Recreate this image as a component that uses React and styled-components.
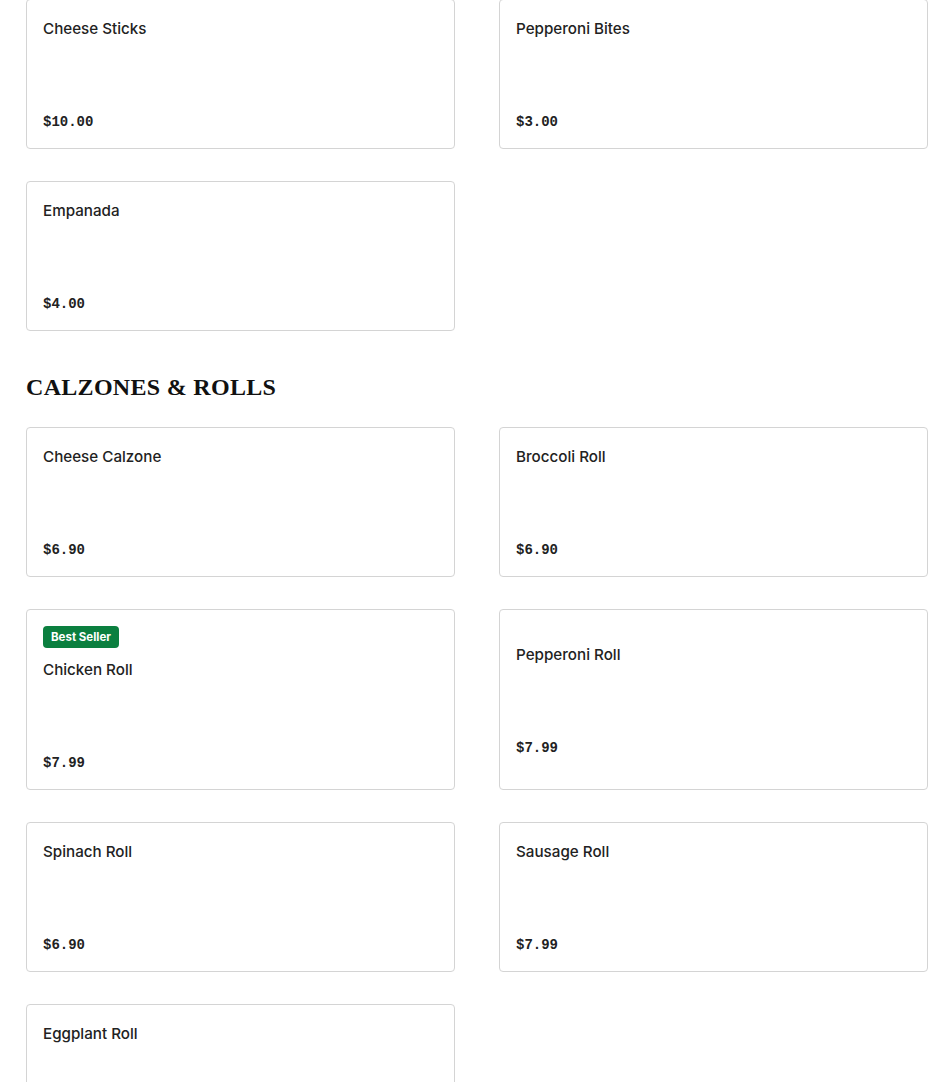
import React from "react";
import styled, { createGlobalStyle } from "styled-components";

const GlobalStyle = createGlobalStyle`
  body {
    margin: 0;
    background: #fff;
    font-family: Inter, "Liberation Sans", sans-serif;
    color: #222;
  }
`;

const sections = [
  {
    title: null,
    items: [
      { name: "Cheese Sticks", price: "$10.00" },
      { name: "Pepperoni Bites", price: "$3.00" },
      { name: "Empanada", price: "$4.00" },
    ],
  },
  {
    title: "CALZONES & ROLLS",
    items: [
      { name: "Cheese Calzone", price: "$6.90" },
      { name: "Broccoli Roll", price: "$6.90" },
      { name: "Chicken Roll", price: "$7.99", badge: "Best Seller" },
      { name: "Pepperoni Roll", price: "$7.99" },
      { name: "Spinach Roll", price: "$6.90" },
      { name: "Sausage Roll", price: "$7.99" },
      { name: "Eggplant Roll", price: "$6.90" },
    ],
  },
];

const App = () => {
  return (
    <>
      <GlobalStyle />
      <Page>
        {sections.map((section, i) => (
          <Section key={i}>
            {section.title && <Heading>{section.title}</Heading>}
            <Grid>
              {section.items.map((item) => (
                <Card key={item.name}>
                  {item.badge && <Badge>{item.badge}</Badge>}
                  <Body>
                    <Name>{item.name}</Name>
                    <Price>{item.price}</Price>
                  </Body>
                </Card>
              ))}
            </Grid>
          </Section>
        ))}
      </Page>
    </>
  );
};

const Page = styled.div`
  padding: 0 22px 40px 26px;
  margin-top: -1px;
`;

const Section = styled.section`
  & + & {
    margin-top: 39px;
  }
`;

const Heading = styled.h2`
  margin: 0 0 23px;
  font-family: "Liberation Serif", "DejaVu Serif", serif;
  font-weight: 700;
  font-size: 24px;
  line-height: 34px;
  letter-spacing: 0.3px;
  color: #111;
`;

const Grid = styled.div`
  display: grid;
  grid-template-columns: 1fr 1fr;
  column-gap: 44px;
  row-gap: 32px;
`;

const Card = styled.div`
  display: flex;
  flex-direction: column;
  justify-content: center;
  border: 1px solid #d4d4d4;
  border-radius: 4px;
  padding: 16px;
  background: #fff;
`;

const Badge = styled.span`
  align-self: flex-start;
  background: #0b7f3f;
  color: #fff;
  font-size: 11.5px;
  font-weight: 700;
  line-height: 22px;
  padding: 0 8px;
  border-radius: 4px;
  margin-bottom: 9px;
`;

const Body = styled.div`
  display: flex;
  flex-direction: column;
  justify-content: space-between;
  min-height: 116px;
`;

const Name = styled.div`
  padding-top: 1px;
  font-size: 15.2px;
  font-weight: 500;
  line-height: 24px;
  color: #222;
`;

const Price = styled.div`
  font-family: "Liberation Mono", "DejaVu Sans Mono", monospace;
  font-weight: 700;
  font-size: 14px;
  line-height: 20px;
  color: #222;
`;

export default App;
